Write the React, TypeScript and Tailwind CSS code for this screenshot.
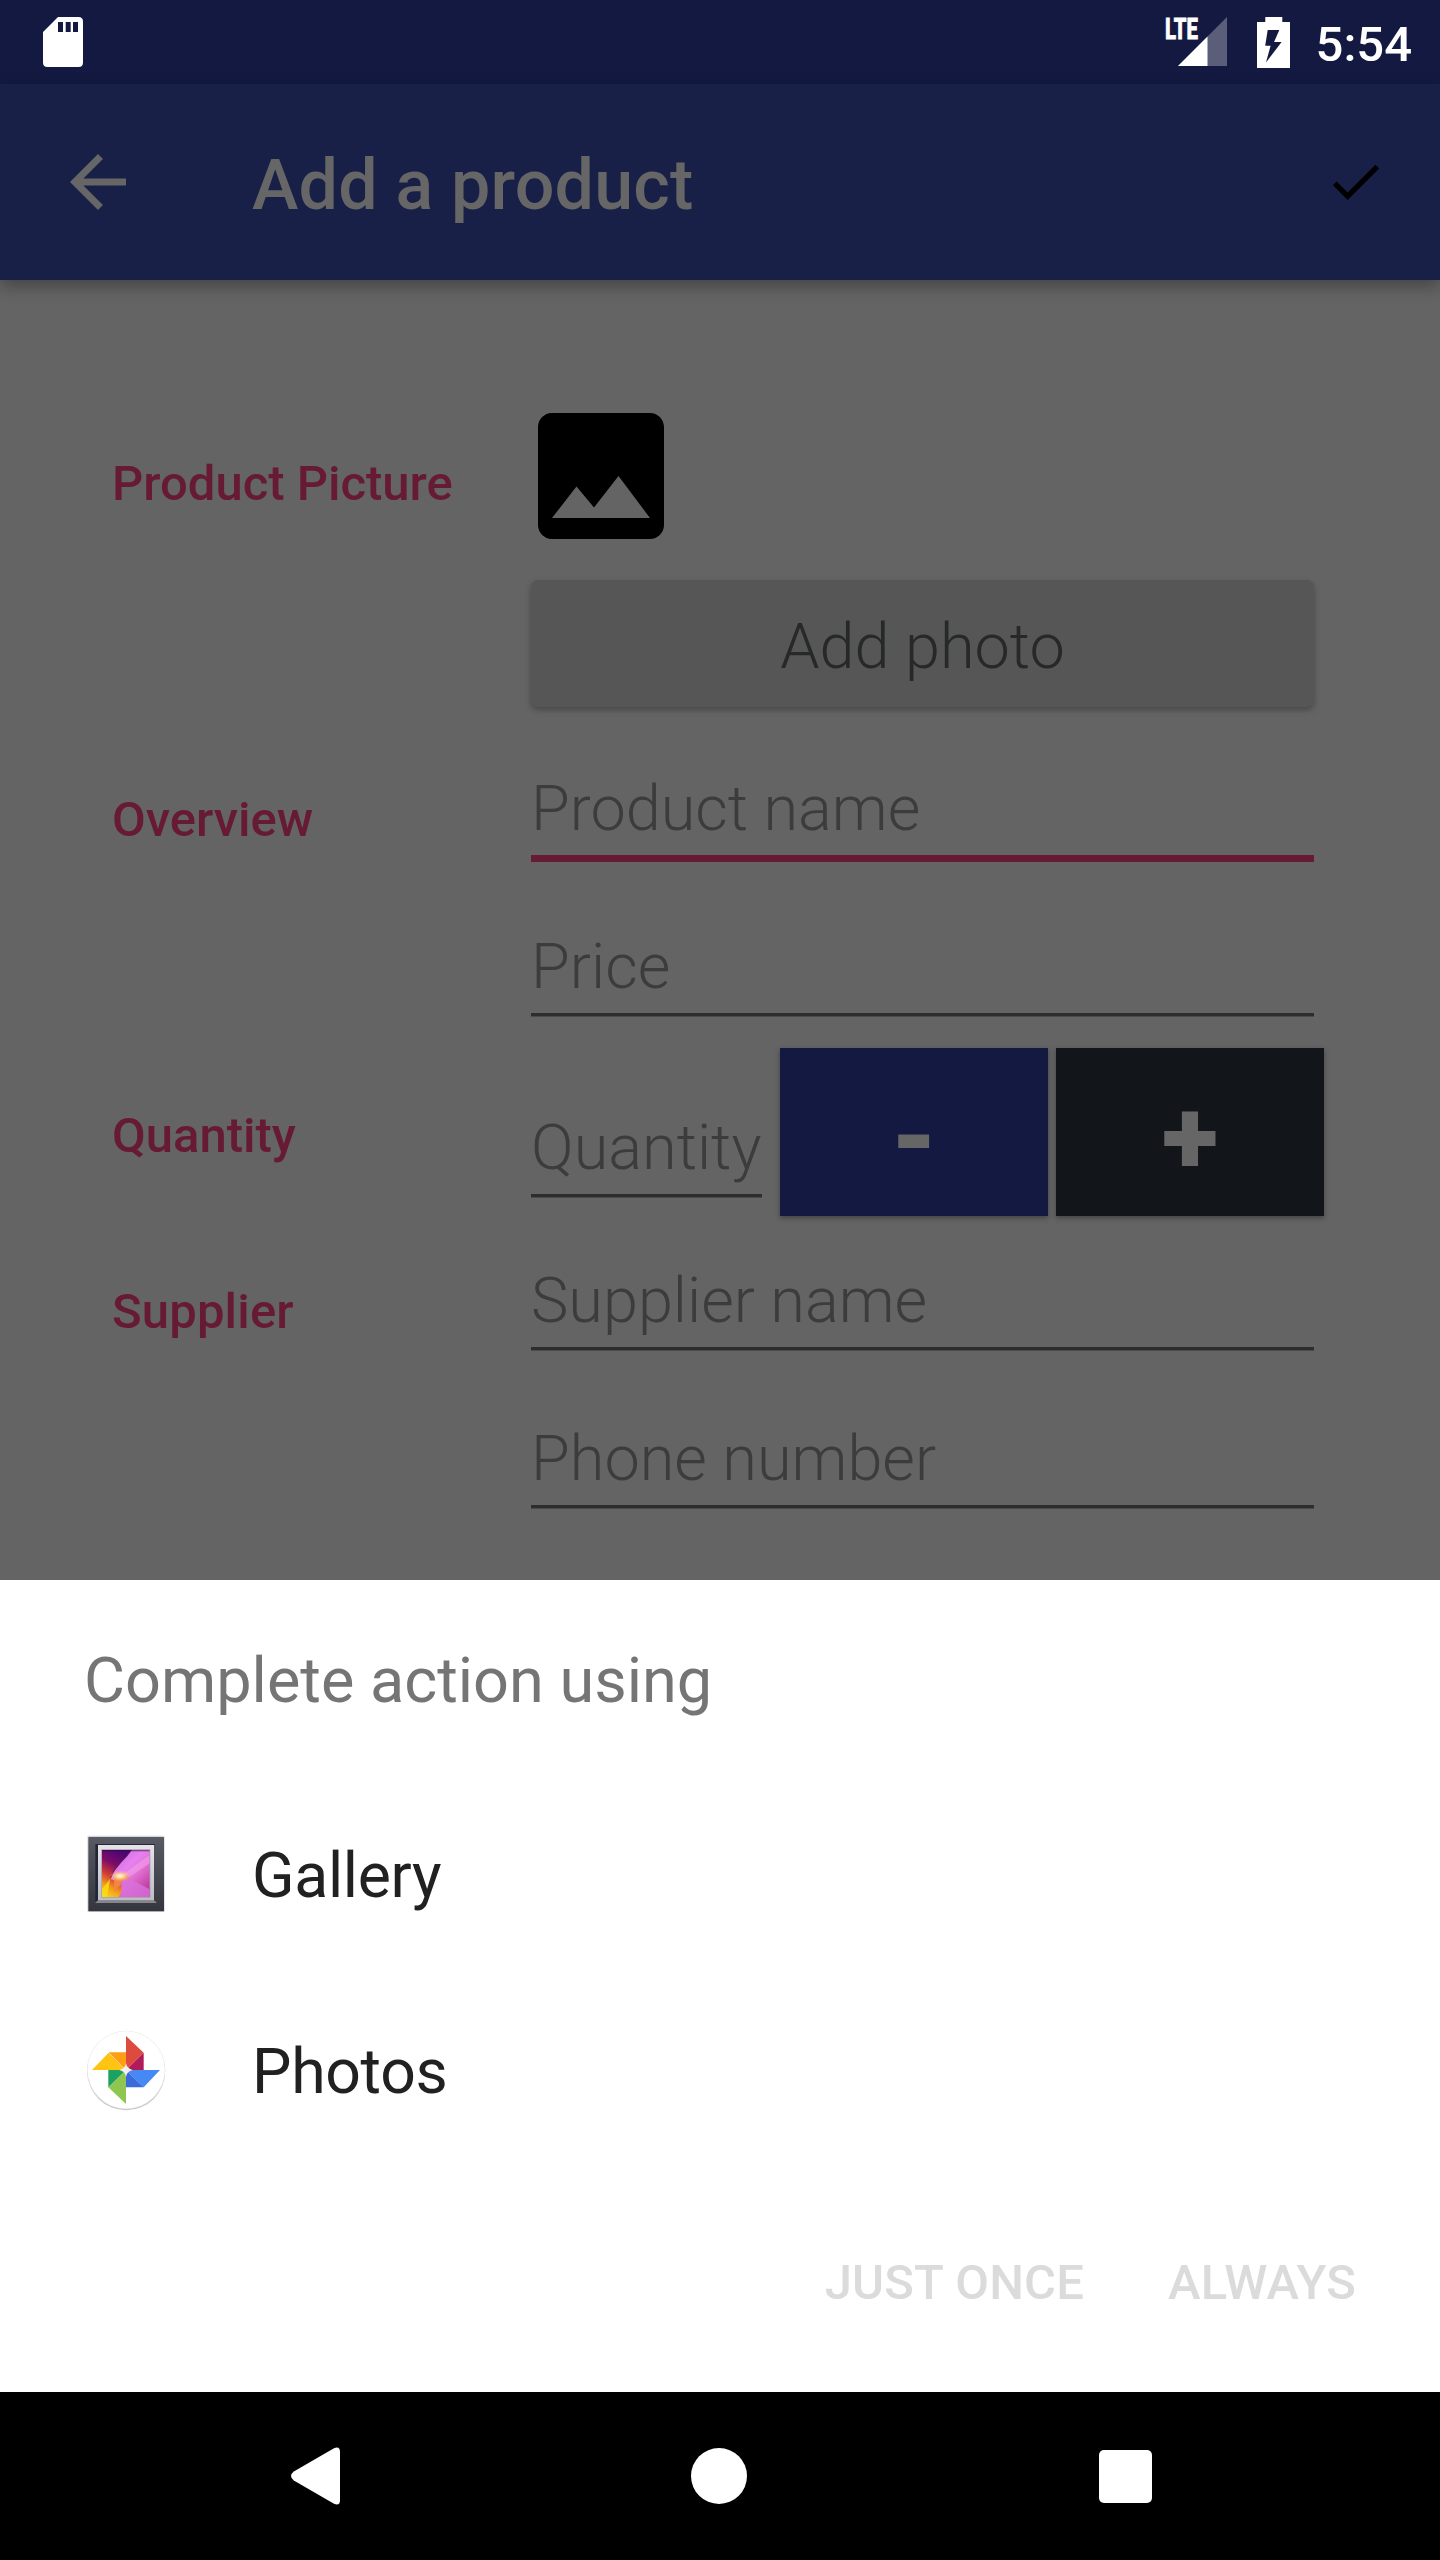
import type { ReactNode } from "react";

function StatusBar() {
  return (
    <div className="flex h-[84px] items-center bg-[#131940] pl-[43px] pr-[28px]">
      <svg className="h-[50px] w-10" viewBox="0 0 40 50" fill="#fff">
        <path
          fillRule="evenodd"
          d="M15 0h20.500q4.500 0 4.500 4.500v41q0 4.500-4.500 4.500h-31q-4.500 0-4.500-4.500V15zM15 5v10h5V5zM22.700 5v10h5V5zM30 5v10h5V5z"
        />
      </svg>
      <svg className="ml-auto h-[62px] w-[67px] overflow-visible" viewBox="1160 11 67 62">
        <path d="M1227 17V66H1178z" fill="#5a5e79" />
        <path d="M1207.500 36.500V66H1178z" fill="#fff" />
        <text
          x="1165"
          y="39"
          textLength="33"
          lengthAdjust="spacingAndGlyphs"
          fill="#fff"
          stroke="#fff"
          strokeWidth="0.8"
          className="text-[29px] font-extrabold"
        >
          LTE
        </text>
      </svg>
      <svg className="ml-[30px] h-[51px] w-[33px]" viewBox="0 0 33 51" fill="#fff">
        <path
          fillRule="evenodd"
          d="M8.300 0h17v5H33v46H0V5h8.300zM10.700 13L8.200 28.700h5.400L9 45.500 24.600 25h-7.500L22.300 13z"
        />
      </svg>
      <span className="ml-[26px] pt-[5px] text-[49px] font-medium leading-[56px] text-white">5:54</span>
    </div>
  );
}

function Toolbar() {
  return (
    <div className="relative flex h-[196px] items-center bg-[#192048] pl-14 pr-[53px] shadow-[0_6px_16px_rgba(0,0,0,0.32)]">
      <svg className="size-[84px]" viewBox="0 0 24 24" fill="#666">
        <path d="M20 11H7.830l5.590-5.590L12 4l-8 8 8 8 1.410-1.410L7.830 13H20v-2z" />
      </svg>
      <h1 className="ml-28 pt-[6px] text-[70px] font-medium leading-[80px] tracking-[0.2px] text-[#666]">
        Add a product
      </h1>
      <svg className="mb-[1px] ml-auto size-[63px]" viewBox="0 0 24 24" fill="#000">
        <path d="M9 16.170L4.830 12l-1.420 1.410L9 19 21 7l-1.410-1.410z" />
      </svg>
    </div>
  );
}

function Row({ label, labelClass, children }: { label: string; labelClass: string; children: ReactNode }) {
  return (
    <div className="flex items-start pl-28">
      <div className={`w-[419px] shrink-0 text-[49px] font-medium leading-[56px] text-[#661a33] ${labelClass}`}>
        {label}
      </div>
      <div>{children}</div>
    </div>
  );
}

function Field({ hint, className, focused }: { hint: string; className: string; focused?: boolean }) {
  return (
    <div className={className}>
      <div className="whitespace-nowrap pb-[9px] text-[63px] font-light leading-[75px] text-[#3c3c3c]">{hint}</div>
      {focused ? (
        <div className="h-[7px] bg-[#661a33]" />
      ) : (
        <div className="h-1 border-b border-[#4a4a4a] bg-[#2d2d2d]" />
      )}
    </div>
  );
}

function StepButton({ sign, className }: { sign: string; className: string }) {
  return (
    <div
      className={`flex h-[168px] w-[268px] items-center justify-center pt-[13px] text-[105px] font-black leading-[120px] text-[#666] shadow-[0_2px_5px_rgba(0,0,0,0.35)] ${className}`}
    >
      {sign}
    </div>
  );
}

function GalleryIcon() {
  return (
    <svg className="size-[84px]" viewBox="72 66 252 252">
      <defs>
        <linearGradient id="frame" x1="0" y1="0" x2="0" y2="1">
          <stop offset="0" stopColor="#585a64" />
          <stop offset="1" stopColor="#34353d" />
        </linearGradient>
        <linearGradient id="mat" x1="0" y1="0" x2="0" y2="1">
          <stop offset="0" stopColor="#e6e4ea" />
          <stop offset="1" stopColor="#bcbcc2" />
        </linearGradient>
        <linearGradient id="petal" x1="0" y1="0" x2="1" y2="1">
          <stop offset="0" stopColor="#c25be0" />
          <stop offset="0.450" stopColor="#e681ee" />
          <stop offset="0.620" stopColor="#e070d2" />
          <stop offset="1" stopColor="#b3268c" />
        </linearGradient>
        <linearGradient id="dusk" x1="0.500" y1="0" x2="0.150" y2="1">
          <stop offset="0" stopColor="#4d0573" />
          <stop offset="0.300" stopColor="#7c0c68" />
          <stop offset="0.550" stopColor="#d23a35" />
          <stop offset="0.780" stopColor="#f39a1c" />
          <stop offset="1" stopColor="#f6d512" />
        </linearGradient>
        <radialGradient id="glow">
          <stop offset="0" stopColor="#fffbe6" />
          <stop offset="0.350" stopColor="#ffe0a0" stopOpacity="0.900" />
          <stop offset="1" stopColor="#ffb060" stopOpacity="0" />
        </radialGradient>
        <clipPath id="canvas">
          <rect x="126" y="120" width="143" height="141" />
        </clipPath>
      </defs>
      <rect x="82" y="77" width="232" height="229" rx="4" fill="#d8d8da" />
      <rect x="85" y="81" width="227" height="223" rx="2" fill="url(#frame)" />
      <path d="M106 102h179v3H114v167l-8 6z" fill="#25253a" />
      <path d="M114 271h168l9 8H105z" fill="#85858b" />
      <rect x="114" y="105" width="168" height="166" fill="url(#mat)" />
      <rect x="124" y="118" width="147" height="145" fill="#9d9aa6" />
      <g clipPath="url(#canvas)">
        <rect x="126" y="120" width="143" height="141" fill="url(#petal)" />
        <path d="M126 120h88q-16 22-34 40-22 24-28 48l34 8q6 24-10 45h-50z" fill="url(#dusk)" />
        <path d="M214 120q-12 20-32 38-24 24-30 46" fill="none" stroke="#3a1230" strokeWidth="2.500" />
        <path d="M269 135L190 192l20 8 59-40z" fill="#f6a8ee" opacity="0.500" />
        <path d="M162 200q24-14 50 6-24-2-30 18l-20 22z" fill="#f2853f" />
        <path d="M182 222q4-20 30-14l57 30v23h-85z" fill="#d970dc" opacity="0.800" />
        <path d="M126 261v-24l24-30-8 54z" fill="#f9dc10" opacity="0.850" />
        <ellipse cx="180" cy="198" rx="32" ry="17" fill="url(#glow)" />
        <rect x="126" y="120" width="143" height="4" fill="#2a0838" opacity="0.500" />
      </g>
    </svg>
  );
}

function PhotosIcon() {
  return (
    <svg className="size-[84px]" viewBox="72 654 252 252">
      <circle cx="198.500" cy="784" r="117" fill="#c4c4c4" />
      <circle cx="198.500" cy="780" r="117.500" fill="#e9e9e9" />
      <circle cx="198.500" cy="779.500" r="115.500" fill="#fff" />
      <path d="M198 678l53 50-53 52z" fill="#dd4b3f" />
      <path d="M251 728v52h-53z" fill="#b01b5a" />
      <path d="M300 780l-49 52-53-52z" fill="#4688f4" />
      <path d="M251 832h-53v-52z" fill="#3a6bd8" />
      <path d="M198 882l-53-50 53-52z" fill="#8fc650" />
      <path d="M145 832v-52h53z" fill="#1ba160" />
      <path d="M96 780l50-52 52 52z" fill="#ffc312" />
      <path d="M146 727h52v53z" fill="#ff9e13" />
      <path d="M198 760q3 16 20 20-17 4-20 20-3-16-20-20 17-4 20-20z" fill="#f1f1f1" />
    </svg>
  );
}

function AppRow({ icon, name }: { icon: ReactNode; name: string }) {
  return (
    <div className="flex h-[196px] items-center pl-[84px]">
      {icon}
      <span className="ml-[84px] pt-[4px] text-[62.5px] leading-[74px] tracking-[-0.3px] text-[#212121]">{name}</span>
    </div>
  );
}

export default function App() {
  return (
    <div className="flex h-[2560px] w-[1440px] flex-col overflow-hidden bg-[#646464] font-['Roboto',sans-serif]">
      <StatusBar />
      <Toolbar />
      <div className="h-[1300px]">
        <Row label="Product Picture" labelClass="mt-[176px]">
          <svg className="-ml-[14px] mt-28 size-[168px]" viewBox="0 0 24 24">
            <path
              d="M21 19V5c0-1.100-.9-2-2-2H5c-1.100 0-2 .9-2 2v14c0 1.100.9 2 2 2h14c1.100 0 2-.9 2-2zM8.500 13.500l2.500 3.010L14.500 12l4.500 6H5l3.500-4.500z"
              fill="#000"
            />
          </svg>
          <div className="mt-5 flex h-[127px] w-[783px] items-center justify-center rounded-[7px] bg-[#565656] pt-[5px] text-[63px] font-light leading-[75px] text-[#272929] shadow-[0_3px_6px_rgba(0,0,0,0.28)]">
            Add photo
          </div>
        </Row>
        <Row label="Overview" labelClass="mt-[85px]">
          <Field hint="Product name" className="w-[783px] pt-16" focused />
          <Field hint="Price" className="w-[783px] pt-[67px]" />
        </Row>
        <Row label="Quantity" labelClass="mt-[91px]">
          <div className="flex items-start">
            <Field hint="Quantity" className="w-[231px] pt-[93px]" />
            <div className="ml-[18px] mt-[31px] flex gap-2">
              <StepButton sign="-" className="bg-[#131940]" />
              <StepButton sign="+" className="bg-[#12151a]" />
            </div>
          </div>
        </Row>
        <Row label="Supplier" labelClass="mt-[68px] tracking-[0.15px]">
          <Field hint="Supplier name" className="w-[783px] pt-[47px]" />
          <Field hint="Phone number" className="w-[783px] pt-[70px]" />
        </Row>
      </div>
      <div className="h-[812px] bg-white">
        <h2 className="pb-[58px] pl-[84px] pt-[64px] text-[63px] leading-[74px] text-[#757575]">
          Complete action using
        </h2>
        <AppRow icon={<GalleryIcon />} name="Gallery" />
        <AppRow icon={<PhotosIcon />} name="Photos" />
        <div className="flex justify-end gap-[84px] pr-[84px] pt-[87px] text-[49px] font-medium leading-[56px] tracking-[0.15px] text-[#dbdbdb]">
          <span>JUST ONCE</span>
          <span>ALWAYS</span>
        </div>
      </div>
      <div className="flex h-[168px] items-center bg-black pl-[291px] pr-[288px]">
        <svg className="h-[58px] w-[50px]" viewBox="0 0 50 58" fill="#fff">
          <path d="M43 1.200Q49 -1.500 49 5v48q0 6.500-6 3.800L2.800 33.500q-5.600-4.500 0-9z" />
        </svg>
        <div className="ml-[350px] size-14 rounded-full bg-white" />
        <div className="ml-auto size-[53px] rounded-[5px] bg-white" />
      </div>
    </div>
  );
}
